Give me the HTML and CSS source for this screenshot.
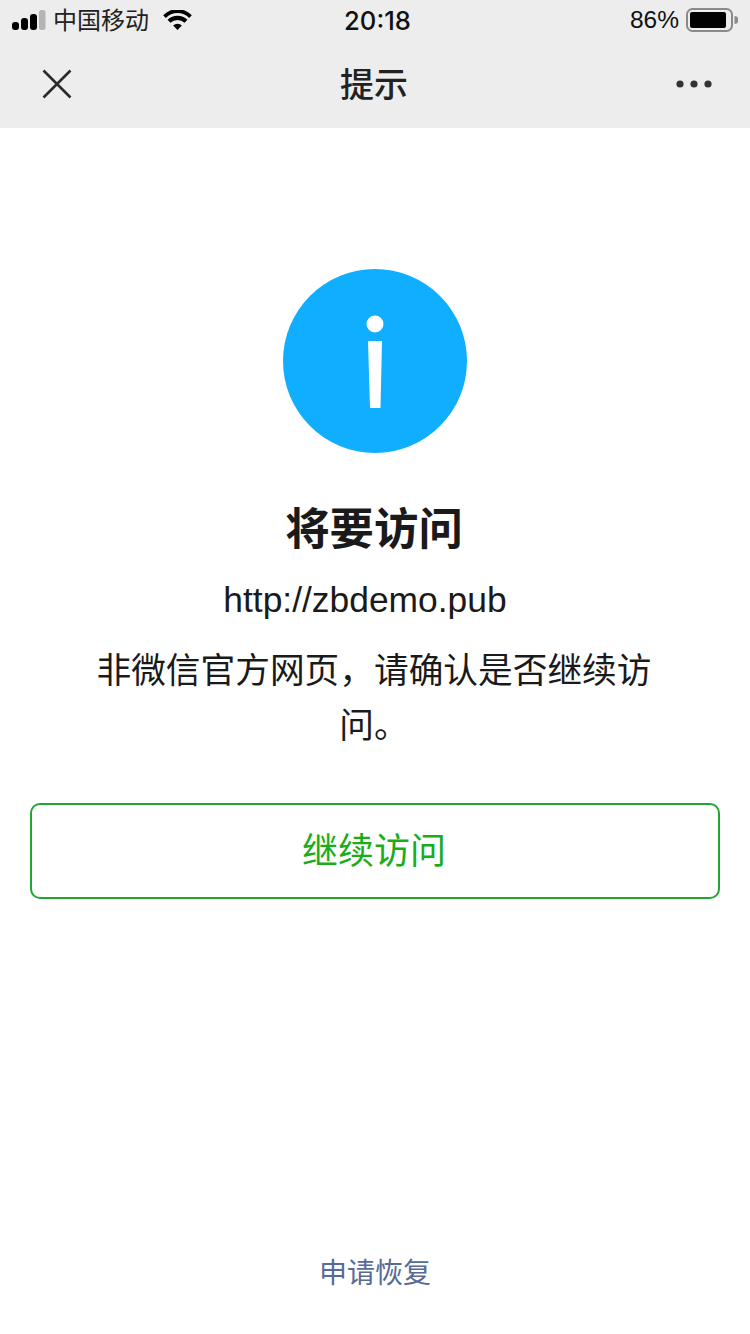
FILE: index.html
```html
<!DOCTYPE html>
<html lang="zh-CN">
  <head>
    <meta charset="UTF-8" />
    <meta name="viewport" content="width=device-width, initial-scale=1.0" />
    <title>提示</title>
    <link rel="stylesheet" href="styles.css">
  </head>
  <body>
    <div class="page">
      <header class="top">
        <div class="status">
          <div class="status-left">
            <svg class="signal" width="34" height="20" viewBox="0 0 34 20">
              <rect x="0" y="12" width="7" height="8" rx="3" fill="#000" />
              <rect x="9" y="8" width="7" height="12" rx="3" fill="#000" />
              <rect x="18" y="4" width="7" height="16" rx="3" fill="#000" />
              <rect x="27" y="0" width="6.5" height="20" rx="2.5" fill="#b4b4b4" />
            </svg>
            <span class="carrier">中国移动</span>
            <svg class="wifi" width="29" height="21" viewBox="0 0 30 22">
              <path d="M15 21 L10.4 16.2 A7 7 0 0 1 19.6 16.2 Z" fill="#000" />
              <path d="M7.6 13.4 L4.6 10.3 A15 15 0 0 1 25.4 10.3 L22.4 13.4 A11 11 0 0 0 7.6 13.4 Z" fill="#000" />
              <path d="M2.8 8.4 L0 5.5 A21 21 0 0 1 30 5.5 L27.2 8.4 A17 17 0 0 0 2.8 8.4 Z" fill="#000" />
            </svg>
          </div>
          <div class="time">20:18</div>
          <div class="status-right">
            <span class="battery-text">86%</span>
            <svg class="battery" width="52" height="24" viewBox="0 0 52 24">
              <rect x="1" y="1" width="45" height="22" rx="5.5" fill="none" stroke="#8a8a8a" stroke-width="2" />
              <rect x="4" y="4" width="36" height="16" rx="2" fill="#000" />
              <path d="M48.5 8 A4 4 0 0 1 48.5 16 Z" fill="#8a8a8a" />
            </svg>
          </div>
        </div>
        <nav class="nav">
          <svg class="nav-close" width="30" height="30" viewBox="0 0 30 30">
            <path d="M1.5 1.5 L28.5 28.5 M28.5 1.5 L1.5 28.5" stroke="#2b2b2b" stroke-width="2.6" fill="none" />
          </svg>
          <h1 class="nav-title">提示</h1>
          <svg class="nav-more" width="36" height="8" viewBox="0 0 36 8">
            <circle cx="4" cy="4" r="3.6" fill="#333" />
            <circle cx="18" cy="4" r="3.6" fill="#333" />
            <circle cx="32" cy="4" r="3.6" fill="#333" />
          </svg>
        </nav>
      </header>

      <main class="content">
        <svg class="info-icon" width="184" height="184" viewBox="0 0 184 184">
          <circle cx="92" cy="92" r="92" fill="#10aeff" />
          <circle cx="92" cy="55" r="8.5" fill="#fff" />
          <path d="M85 72 H99 L97.5 139 H87 Z" fill="#fff" />
        </svg>
        <h2 class="title">将要访问</h2>
        <p class="url">http://zbdemo.pub</p>
        <p class="desc">非微信官方网页，请确认是否继续访问。</p>
        <a class="btn" href="#">继续访问</a>
      </main>

      <footer class="foot">
        <a class="foot-link" href="#">申请恢复</a>
      </footer>
    </div>
  </body>
</html>
```

FILE: styles.css
```css
body {
  margin: 0;
  background: #fff;
  font-family: "Liberation Sans", "Noto Sans CJK SC", sans-serif;
  color: #1a1a1a;
}

.page {
  display: flex;
  flex-direction: column;
  width: 750px;
  height: 1334px;
  overflow: hidden;
}

.top {
  background: #ededed;
  height: 128px;
  flex-shrink: 0;
}

.status {
  display: grid;
  grid-template-columns: 1fr auto 1fr;
  align-items: center;
  height: 40px;
  padding: 0 12px;
  color: #111;
}

.status-left {
  display: flex;
  align-items: center;
}

.carrier {
  font-size: 24px;
  margin: 0 0 3px 7px;
  color: #222;
}

.wifi {
  margin-left: 14px;
}

.time {
  padding-left: 5px;
  font-size: 25.6px;
  font-weight: 500;
  font-family: "Inter", "Liberation Sans", sans-serif;
}

.status-right {
  display: flex;
  align-items: center;
  justify-content: flex-end;
  gap: 7px;
}

.battery-text {
  font-size: 24.5px;
  font-family: "Liberation Sans", sans-serif;
}

.nav {
  display: flex;
  align-items: center;
  justify-content: space-between;
  height: 88px;
  padding: 0 38px 0 42px;
}

.nav-title {
  margin: 0 0 4px;
  font-size: 34px;
  font-weight: 500;
  color: #222;
}

.content {
  display: flex;
  flex-direction: column;
  align-items: center;
  flex: 1;
  padding: 141px 30px 0;
}

.title {
  margin: 52px 2px 0 0;
  font-size: 44.4px;
  line-height: 50px;
  font-weight: 700;
  color: #1a1a1a;
}

.url {
  margin: 23px 20px 0 0;
  font-size: 35.4px;
  line-height: 44px;
  color: #1a1a1a;
}

.desc {
  width: 560px;
  margin: 22px 2px 0 0;
  font-size: 34.7px;
  line-height: 55px;
  text-align: center;
  color: #1a1a1a;
}

.btn {
  display: flex;
  align-items: center;
  justify-content: center;
  box-sizing: border-box;
  width: 690px;
  height: 96px;
  margin-top: 49px;
  padding: 0 2px 6px 0;
  border: 2px solid #22a532;
  border-radius: 10px;
  font-size: 36px;
  color: #1aad19;
  text-decoration: none;
}

.foot {
  display: flex;
  justify-content: center;
  padding-bottom: 40px;
}

.foot-link {
  font-size: 28px;
  line-height: 40px;
  color: #576b95;
  text-decoration: none;
}
```
